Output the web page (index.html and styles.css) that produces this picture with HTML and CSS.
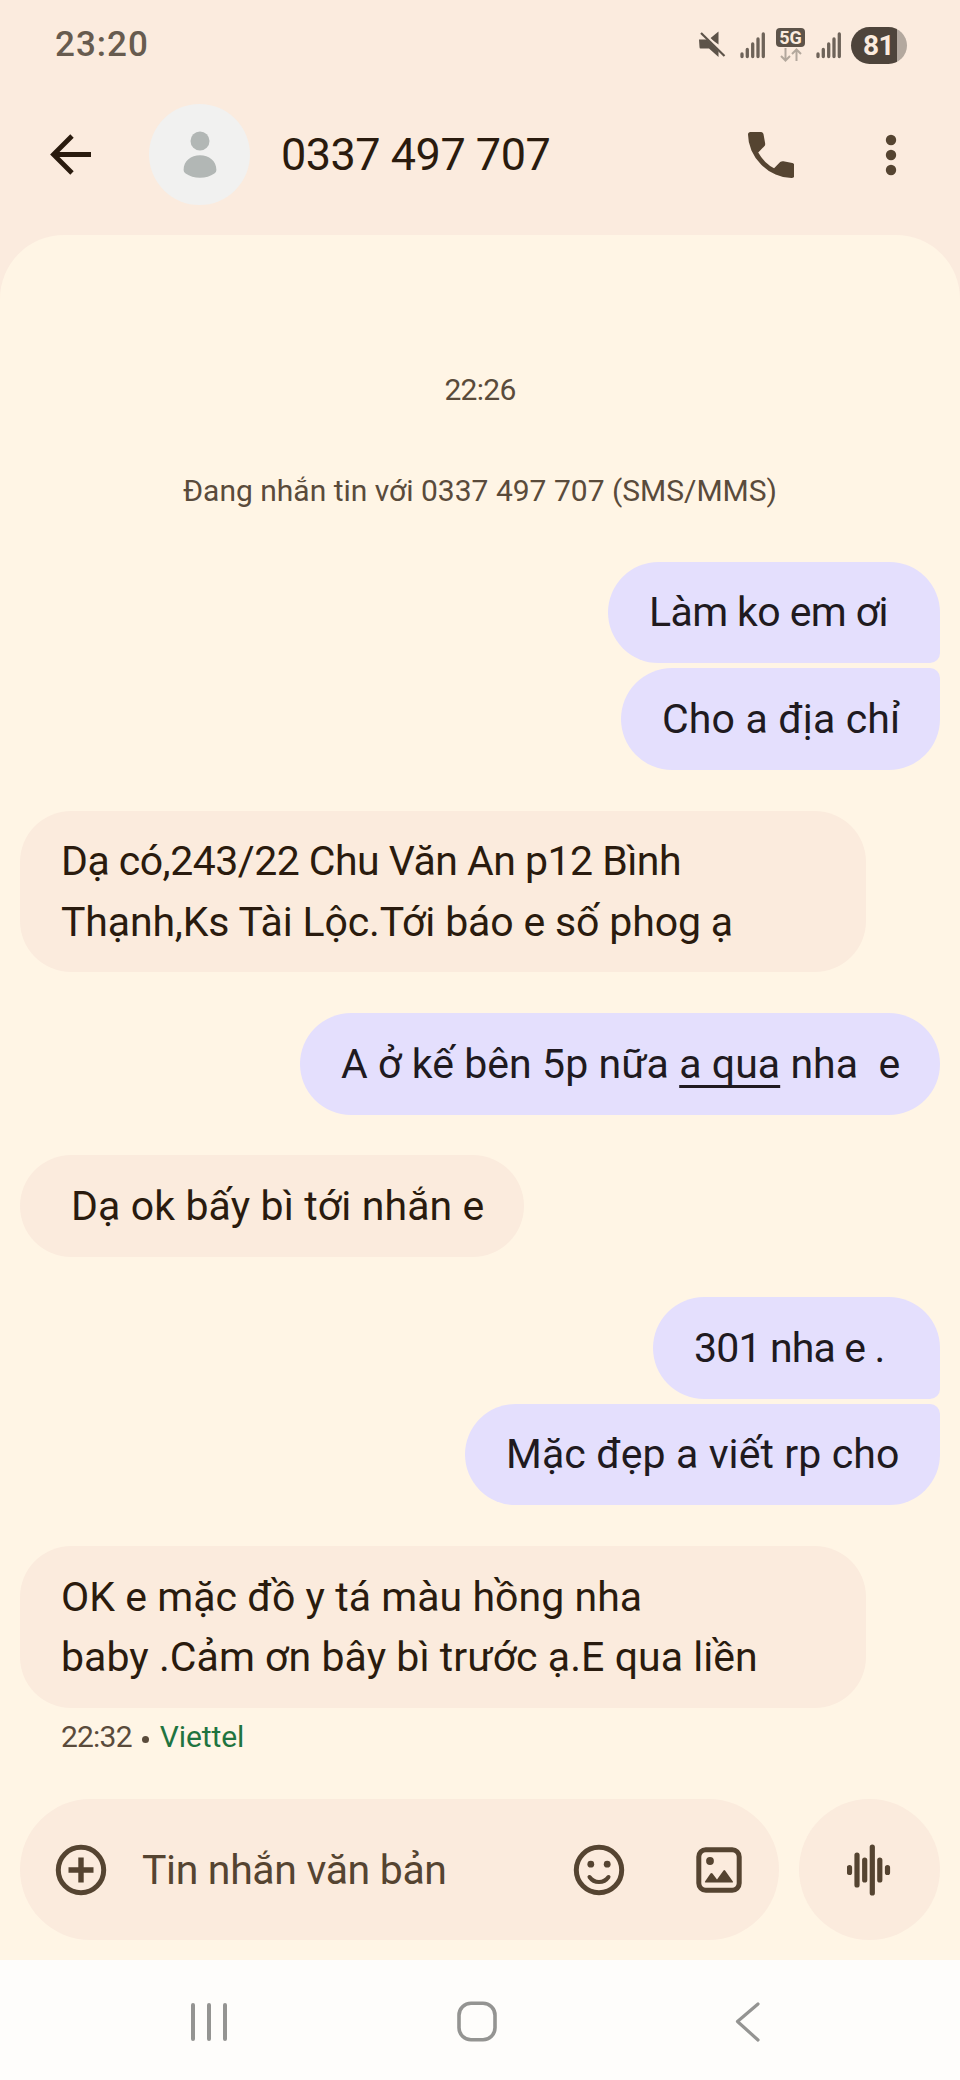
FILE: index.html
```html
<!DOCTYPE html>
<html lang="vi">
<head>
<meta charset="utf-8">
<title>0337 497 707</title>
<link rel="stylesheet" href="styles.css">
</head>
<body>
<div class="phone">
  <header class="top">
    <div class="status">
      <span class="clock">23:20</span>
      <div class="indicators">
        <svg class="mute" width="28" height="28" viewBox="0 0 28 28"><path d="M11 7.500 19.500.5v13z" fill="#5d5349"/><path d="M0 8.500h8L19.500 20v6L10 17.500H1.500Q.5 17.500.5 16z" fill="#5d5349"/><path d="M4 1.500 27 24" stroke="#fbebde" stroke-width="2.500"/><path d="M2 2 25.500 25" stroke="#5d5349" stroke-width="2.200"/></svg>
        <svg class="bars b1" width="26" height="27" viewBox="0 0 26 27"><g stroke="#6e6359" stroke-width="3.300" stroke-linecap="round"><path d="M2 22v2.500M7.300 17.500v7M12.700 12v12.500M18 7v17.500M23.300 2v22.500"/></g></svg>
        <div class="net"><span class="g5">5G</span><svg width="24" height="14" viewBox="0 0 24 14"><g fill="none" stroke="#b3a89d" stroke-width="2"><path d="M6.500 0v12M2 8l4.500 4.500L11 8M17.500 13V1.500M13 6l4.500-4.500L22 6"/></g></svg></div>
        <svg class="bars b2" width="26" height="27" viewBox="0 0 26 27"><g stroke="#6e6359" stroke-width="3.300" stroke-linecap="round"><path d="M2 22v2.500M7.300 17.500v7M12.700 12v12.500M18 7v17.500M23.300 2v22.500"/></g></svg>
        <div class="battery"><span class="pct">81</span></div>
      </div>
    </div>
    <div class="appbar">
      <svg class="back" width="42" height="42" viewBox="0 0 42 42"><path d="M41 20.500H5M22 2 3.500 20.500 22 39" fill="none" stroke="#2a1b0e" stroke-width="4.800"/></svg>
      <div class="avatar"><svg width="34" height="48" viewBox="0 0 34 48"><circle cx="17" cy="10" r="9.500" fill="#b2b7b5"/><path d="M.6 39C.6 30 8 24.300 17 24.300S33.400 30 33.400 39q0 2.500-2 3.600-6 4.200-14.400 4.200T2.600 42.600Q.6 41.500.6 39z" fill="#b2b7b5"/></svg></div>
      <h1 class="title">0337 497 707</h1>
      <svg class="call" width="46" height="46" viewBox="3 3 18 18"><path d="M20.010 21Q16.900 21 13.800 19.600 10.700 18.300 8.200 15.800 5.700 13.300 4.350 10.200 3 7.100 3 3.990 3 3 4 3H8.100q.4 0 .65.260.25.250.32.600L9.700 7.400q.05.400-.02.700-.08.270-.3.500L7 11q1.300 2.200 2.800 3.700 1.550 1.500 3.400 2.500l2.300-2.350q.25-.250.600-.350.400-.120.750-.050l3.500.7q.350.100.580.350.250.250.250.600V20q0 1-1.170 1z" fill="#554431"/></svg>
      <svg class="more" width="12" height="42" viewBox="0 0 12 42"><g fill="#554431"><circle cx="6" cy="6" r="5.200"/><circle cx="6" cy="21" r="5.200"/><circle cx="6" cy="36" r="5.200"/></g></svg>
    </div>
  </header>
  <main class="chat">
    <div class="time">22:26</div>
    <div class="notice">Đang nhắn tin với 0337 497 707 (SMS/MMS)</div>
    <div class="msg out first w1">Làm ko em ơi</div>
    <div class="msg out last w2">Cho a địa chỉ</div>
    <div class="msg in wide"><span class="l1">Dạ có,243/22 Chu Văn An p12 Bình</span><br><span class="l2">Thạnh,Ks Tài Lộc.Tới báo e số phog ạ</span></div>
    <div class="msg out w4">A ở kế bên 5p nữa <u>a qua</u> nha&nbsp; e</div>
    <div class="msg in w5">Dạ ok bấy bì tới nhắn e</div>
    <div class="msg out first w6">301 nha e .</div>
    <div class="msg out last w7">Mặc đẹp a viết rp cho</div>
    <div class="msg in wide"><span class="l3">OK e mặc đồ y tá màu hồng nha</span><br><span class="l3">baby .Cảm ơn bây bì trước ạ.E qua liền</span></div>
    <div class="meta"><span class="sent">22:32</span><i class="dot"></i><span class="carrier">Viettel</span></div>
  </main>
  <footer class="compose">
    <div class="field">
      <svg class="plus" width="52" height="52" viewBox="0 0 52 52"><g fill="none" stroke="#554431" stroke-width="5"><circle cx="26" cy="26" r="22.700"/><path d="M26 13.500v25M13.500 26h25" stroke-width="5.400"/></g></svg>
      <span class="hint">Tin nhắn văn bản</span>
      <svg class="smile" width="52" height="52" viewBox="0 0 52 52"><circle cx="26" cy="26" r="22.700" fill="none" stroke="#554431" stroke-width="5"/><circle cx="17.800" cy="20.200" r="3.400" fill="#554431"/><circle cx="34.200" cy="20.200" r="3.400" fill="#554431"/><path d="M16.500 33q3.500 5 9.500 5t9.500-5" fill="none" stroke="#554431" stroke-width="4" stroke-linecap="round"/></svg>
      <svg class="image" width="46" height="46" viewBox="0 0 46 46"><rect x="2.800" y="2.800" width="40.400" height="40.400" rx="7" fill="none" stroke="#554431" stroke-width="5"/><circle cx="14" cy="14" r="3.900" fill="#554431"/><path d="M9.500 35.500q-1 0-.5-1l5.500-8q1-1 2 0l4.500 6 6.500-9q.8-1 1.600 0l7.800 11q.5 1-.5 1z" fill="#554431"/></svg>
    </div>
    <div class="voice"><svg width="46" height="52" viewBox="0 0 46 52"><path d="M2.500 23.500v5M10 11v30M17.700 16v20M25.300 3v46M32.800 16v20M40.500 23.500v5" stroke="#554431" stroke-width="5.200" stroke-linecap="round"/></svg></div>
  </footer>
  <nav class="nav">
    <svg width="38" height="40" viewBox="0 0 38 40"><path d="M3 3v34M19 3v34M35 3v34" stroke="#949492" stroke-width="4" stroke-linecap="round"/></svg>
    <svg class="home" width="40" height="42" viewBox="0 0 40 42"><rect x="2" y="2.200" width="36" height="36.500" rx="12" fill="none" stroke="#949492" stroke-width="3.600"/></svg>
    <svg width="26" height="42" viewBox="0 0 26 42"><path d="M23 3 2.500 20.500 23 39" fill="none" stroke="#949492" stroke-width="3.200" stroke-linecap="round" stroke-linejoin="round"/></svg>
  </nav>
</div>
</body>
</html>
```
FILE: styles.css
```css
* { box-sizing: border-box; }
body { margin: 0; font-family: Roboto, "Noto Sans", sans-serif; color: #2a1b0e; background: #fbebde; }
svg { display: block; flex: none; }
.phone { width: 960px; height: 2080px; display: flex; flex-direction: column; }
.top { height: 235px; flex: none; }
.status { height: 90px; padding: 0 53px 0 55px; display: flex; align-items: center; justify-content: space-between; }
.clock { font-size: 35px; font-weight: 500; letter-spacing: 1px; color: #675b4f; line-height: 40px; }
.indicators { display: flex; align-items: center; }
.b1 { margin-left: 13px; }
.b2 { margin-left: 11px; }
.net { width: 29px; height: 34px; margin-left: 10px; display: flex; flex-direction: column; align-items: center; gap: 1px; }
.g5 { width: 29px; height: 19px; border-radius: 4px; background: #5d5349; color: #fbebde; font-size: 18px; font-weight: 700; line-height: 20px; text-align: center; }
.battery { width: 56px; height: 37px; margin-left: 9px; border-radius: 18.5px; background: linear-gradient(90deg, #4e443b 46px, #b3a89e 46px); }
.pct { display: block; padding-left: 12px; font-size: 28px; line-height: 38px; font-weight: 700; letter-spacing: -0.5px; color: #fbebde; }
.appbar { height: 129px; padding: 0 63px 0 50px; display: flex; align-items: center; }
.avatar { width: 101px; height: 101px; margin-left: 57px; border-radius: 50%; background: #f1f1f0; display: flex; align-items: center; justify-content: center; }
.title { margin: 0 auto 0 31px; font-size: 45px; font-weight: 400; line-height: 60px; letter-spacing: -0.5px; }
.more { margin-left: 91px; }
.chat { flex: 1; background: #fff5e5; border-radius: 64px 64px 0 0; padding: 134.500px 20px 0; display: flex; flex-direction: column; align-items: flex-start; }
.time, .notice { align-self: center; font-size: 30px; line-height: 40px; color: #5a4b3b; }
.time { letter-spacing: -0.7px; }
.notice { margin: 61.500px 0 10px; }
.msg { margin-top: 40.700px; padding: 20.400px 41px; border-radius: 51px; font-size: 41px; line-height: 60.600px; white-space: nowrap; }
.in { background: #fbebdd; }
.out { align-self: flex-end; background: #e4dffd; color: #201a20; }
.first { border-bottom-right-radius: 10px; }
.last { border-top-right-radius: 10px; margin-top: 5.400px; }
.wide { width: 846px; }
.w1 { width: 332px; letter-spacing: -0.6px; }
.w2 { width: 319px; letter-spacing: 0.15px; }
.w4 { width: 640px; letter-spacing: 0.06px; }
.w5 { width: 504px; padding-left: 51px; letter-spacing: 0.12px; }
.w6 { width: 287px; letter-spacing: -0.85px; }
.w7 { width: 475px; letter-spacing: 0.1px; }
.l1 { letter-spacing: -0.52px; }
.l2 { letter-spacing: -0.15px; }
.l3 { letter-spacing: 0.05px; }
.msg u { text-decoration-thickness: 3px; text-underline-offset: 7px; text-decoration-skip-ink: none; }
.meta { margin: 9px 0 0 41px; display: flex; align-items: center; font-size: 30px; line-height: 40px; color: #5a4b3b; }
.sent { letter-spacing: -0.8px; }
.dot { width: 7px; height: 7px; margin: 4px 11px 0 10px; border-radius: 50%; background: #5a4b3b; }
.carrier { color: #1f7440; letter-spacing: -0.1px; }
.compose { flex: none; height: 161px; padding: 0 20px; display: flex; justify-content: space-between; background: #fff5e5; }
.field { width: 759px; height: 141px; border-radius: 71px; background: #fbebdd; display: flex; align-items: center; padding: 0 37px 0 35px; }
.hint { flex: none; width: 466px; padding-left: 35px; font-size: 41px; line-height: 60px; letter-spacing: -0.35px; color: #554431; }
.image { margin-left: 71px; }
.voice { width: 141px; height: 141px; border-radius: 50%; background: #fbebdd; display: flex; align-items: center; justify-content: center; }
.nav { flex: none; height: 120px; background: #fefdfb; display: flex; align-items: center; padding: 4px 199px 0 190px; justify-content: space-between; }
.home { margin-right: 10px; }
```
